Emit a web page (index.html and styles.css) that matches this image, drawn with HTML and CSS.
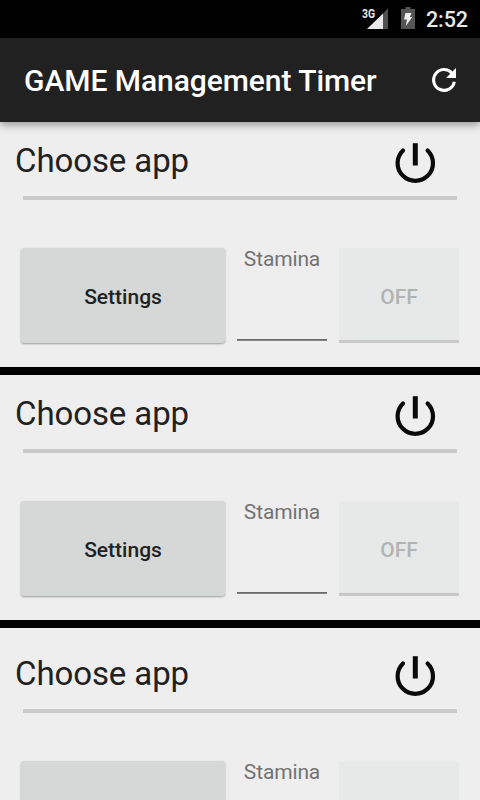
FILE: index.html
```html
<!DOCTYPE html>
<html lang="en">
<head>
<meta charset="utf-8">
<title>GAME Management Timer</title>
<link rel="stylesheet" href="styles.css">
</head>
<body>
<div class="status">
  <svg class="signal" width="27" height="24" viewBox="0 0 27 24">
    <path fill="#505050" d="M21 6.500 26 1.200V22H21z"/>
    <path fill="#e8e8e8" d="M5 22 21 6.500V22z"/>
    <text x="0" y="10.700" textLength="13" lengthAdjust="spacingAndGlyphs">3G</text>
  </svg>
  <svg class="battery" width="14" height="22" viewBox="0 0 14 22">
    <path fill="#555" d="M4.500 0h5v2H14v20H0V2h4.500z"/>
    <path fill="#f0f0f0" d="M4.500 6h6L8.800 10h2.500L4.800 19l1.200-6.500H3z"/>
  </svg>
  <span class="clock">2:52</span>
</div>
<header class="bar">
  <h1>GAME Management Timer</h1>
  <svg width="36" height="36" viewBox="0 0 36 36"><path fill="none" stroke="#fff" stroke-width="3.100" d="M28.300 19.700A10.400 10.400 0 1 1 25.800 11"/><path fill="#fff" d="M30 6V16H20z"/></svg>
</header>
<main>
  <section class="panel">
    <div class="head">
      <span class="app">Choose app</span>
      <svg class="power" width="44" height="44" viewBox="0 0 44 44"><path d="M10 9.400A17.700 17.700 0 1 0 34.600 9.400"/><path class="stem" d="M22.300 2.200V24.500"/></svg>
    </div>
    <div class="rule"></div>
    <div class="controls">
      <button class="settings">Settings</button>
      <label class="stamina">Stamina<span class="field"></span></label>
      <button class="toggle" disabled>OFF</button>
    </div>
  </section>
  <section class="panel">
    <div class="head">
      <span class="app">Choose app</span>
      <svg class="power" width="44" height="44" viewBox="0 0 44 44"><path d="M10 9.400A17.700 17.700 0 1 0 34.600 9.400"/><path class="stem" d="M22.300 2.200V24.500"/></svg>
    </div>
    <div class="rule"></div>
    <div class="controls">
      <button class="settings">Settings</button>
      <label class="stamina">Stamina<span class="field"></span></label>
      <button class="toggle" disabled>OFF</button>
    </div>
  </section>
  <section class="panel last">
    <div class="head">
      <span class="app">Choose app</span>
      <svg class="power" width="44" height="44" viewBox="0 0 44 44"><path d="M10 9.400A17.700 17.700 0 1 0 34.600 9.400"/><path class="stem" d="M22.300 2.200V24.500"/></svg>
    </div>
    <div class="rule"></div>
    <div class="controls">
      <button class="settings"></button>
      <label class="stamina">Stamina<span class="field"></span></label>
      <button class="toggle" disabled></button>
    </div>
  </section>
</main>
</body>
</html>
```

FILE: styles.css
```css
* { box-sizing: border-box; }
body {
  margin: 0;
  height: 800px;
  overflow: hidden;
  display: flex;
  flex-direction: column;
  background: #000;
  font-family: Roboto, sans-serif;
  color: #212121;
}
.status {
  height: 38px;
  flex: none;
  display: flex;
  justify-content: flex-end;
  align-items: flex-start;
  padding: 7px 12px 0 0;
}
.signal { margin-right: 12px; }
.signal text { font: 700 12.5px Roboto, sans-serif; fill: #e8e8e8; }
.battery { margin-right: 11px; }
.clock {
  color: #e8e8e8;
  font-size: 21.5px;
  font-weight: 500;
  line-height: 26px;
  letter-spacing: -0.1px;
  width: 42px;
  white-space: nowrap;
}
.bar {
  height: 84px;
  flex: none;
  display: flex;
  align-items: center;
  justify-content: space-between;
  padding: 0 18px 0 24px;
  background: #212121;
  box-shadow: 0 3px 8px rgba(0, 0, 0, .36);
  position: relative;
}
h1 {
  margin: 0;
  font-size: 30px;
  font-weight: 500;
  letter-spacing: -0.05px;
  color: #fff;
  white-space: nowrap;
}
main {
  flex: 1;
  min-height: 0;
  overflow: hidden;
  display: flex;
  flex-direction: column;
  gap: 8px;
}
.panel {
  height: 245px;
  flex: none;
  background: #eee;
}
.last { padding-top: 7px; }
.head {
  height: 74px;
  display: flex;
  justify-content: space-between;
  padding: 19px 43px 0 15px;
}
.app { font-size: 33px; line-height: 39px; letter-spacing: -0.1px; }
.power { fill: none; stroke: #0a0a0a; stroke-width: 4.2; stroke-linecap: round; }
.stem { stroke-width: 5; stroke-linecap: butt; }
.rule { height: 4px; margin: 0 23px; background: #cacaca; }
.controls {
  display: flex;
  height: 95px;
  margin: 48px 21px 0 21px;
}
button {
  border: 0;
  padding: 0;
  font: 500 21px Roboto, sans-serif;
}
.settings {
  width: 204px;
  border-radius: 3px;
  background: #d6d8d7;
  color: #212121;
  padding-top: 2px;
  box-shadow: 0 1px 2px rgba(0, 0, 0, .34);
}
.stamina {
  width: 90px;
  margin: 0 12px;
  height: 93px;
  display: flex;
  flex-direction: column;
  justify-content: space-between;
  align-items: center;
  font-size: 21px;
  line-height: 22px;
  letter-spacing: -0.15px;
  color: #737373;
}
.field { width: 90px; height: 2px; background: #828282; border-top: 1px solid #6b6b6b; }
.toggle {
  width: 120px;
  border-radius: 3px 3px 0 0;
  border-bottom: 3px solid #c8c8c8;
  background: #e6e9e8;
  color: #b2b4b3;
  padding-top: 5px;
}
```
